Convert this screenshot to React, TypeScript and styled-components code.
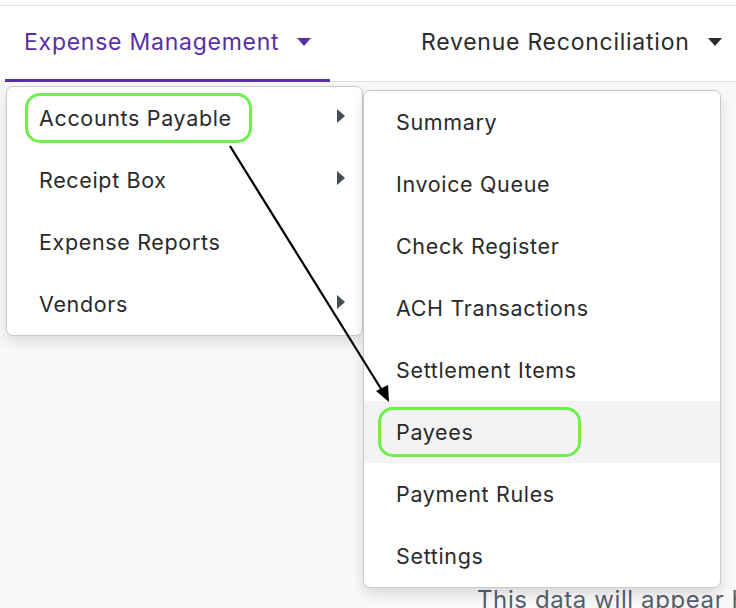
import React from "react";
import styled, { createGlobalStyle } from "styled-components";

const Global = createGlobalStyle`
  html, body { margin: 0; padding: 0; }
  body {
    background: #f9f9f9;
    font-family: Inter, "Noto Sans", "Liberation Sans", sans-serif;
    -webkit-font-smoothing: antialiased;
  }
`;

const Page = styled.div`
  position: relative;
  width: 736px;
  height: 608px;
  overflow: hidden;
  background: #f9f9f9;
`;

const TopStrip = styled.div`
  height: 5px;
  background: #ffffff;
  border-bottom: 1px solid #e2e2e2;
`;

const NavBar = styled.nav`
  display: flex;
  align-items: stretch;
  height: 75px;
  background: #ffffff;
  border-bottom: 1px solid #e0e0e0;
  padding-left: 5px;
`;

const NavTab = styled.div<{ $active?: boolean; $width: number; $pad: number }>`
  display: flex;
  align-items: center;
  gap: 18px;
  width: ${(p) => p.$width}px;
  box-sizing: border-box;
  padding-left: ${(p) => p.$pad}px;
  padding-bottom: 2px;
  font-size: 23px;
  letter-spacing: 0.75px;
  color: ${(p) => (p.$active ? "#5a2ea6" : "#2b2b2b")};
  border-bottom: 3px solid ${(p) => (p.$active ? "#5a2ea6" : "transparent")};
  margin-bottom: -1px;
  white-space: nowrap;
`;

const CaretDown = styled.span`
  width: 0;
  height: 0;
  border-left: 7px solid transparent;
  border-right: 7px solid transparent;
  border-top: 8px solid currentColor;
  margin-top: 1px;
`;

const Content = styled.div`
  display: flex;
  justify-content: flex-start;
  padding: 503px 0 0 477px;
  font-size: 24px;
  letter-spacing: 0.6px;
  color: #56606b;
  white-space: nowrap;
`;

const Menu = styled.div<{ $top: number; $left: number; $width: number }>`
  position: absolute;
  top: ${(p) => p.$top}px;
  left: ${(p) => p.$left}px;
  width: ${(p) => p.$width}px;
  box-sizing: border-box;
  background: #ffffff;
  border: 1px solid #c9c9c9;
  border-radius: 7px;
  box-shadow: 0 6px 14px rgba(0, 0, 0, 0.13);
  overflow: hidden;
`;

const Item = styled.div<{ $pad: number; $hover?: boolean }>`
  display: flex;
  align-items: center;
  justify-content: space-between;
  height: 62px;
  padding-left: ${(p) => p.$pad}px;
  padding-right: 17px;
  font-size: 21.5px;
  letter-spacing: 0.65px;
  color: #2a2a2a;
  background: ${(p) => (p.$hover ? "#f3f3f3" : "transparent")};
  white-space: nowrap;
`;

const Label = styled.span<{ $ring?: boolean; $left?: number; $right?: number }>`
  display: inline-flex;
  align-items: center;
  ${(p) =>
    p.$ring
      ? `
    height: 50px;
    box-sizing: border-box;
    border: 3px solid #6ef04c;
    border-radius: 15px;
    margin-left: -${p.$left}px;
    padding-left: ${p.$left! - 3}px;
    padding-right: ${p.$right! - 3}px;
  `
      : ""}
`;

const CaretRight = styled.span`
  width: 0;
  height: 0;
  border-top: 7px solid transparent;
  border-bottom: 7px solid transparent;
  border-left: 8px solid #464c55;
  margin-bottom: 4px;
`;

const Overlay = styled.svg`
  position: absolute;
  left: 0;
  top: 0;
  pointer-events: none;
`;

const leftItems = [
  { label: "Accounts Payable", sub: true, ring: true },
  { label: "Receipt Box", sub: true },
  { label: "Expense Reports", sub: false },
  { label: "Vendors", sub: true },
];

const rightItems = [
  "Summary",
  "Invoice Queue",
  "Check Register",
  "ACH Transactions",
  "Settlement Items",
  "Payees",
  "Payment Rules",
  "Settings",
];

export default function App() {
  return (
    <Page>
      <Global />
      <TopStrip />
      <NavBar>
        <NavTab $active $width={325} $pad={19}>
          Expense Management
          <CaretDown />
        </NavTab>
        <NavTab $width={406} $pad={91}>
          Revenue Reconciliation
          <CaretDown />
        </NavTab>
      </NavBar>
      <Content>This data will appear here</Content>

      <Menu $top={86} $left={6} $width={357}>
        {leftItems.map((it) => (
          <Item key={it.label} $pad={32}>
            <Label $ring={it.ring} $left={14} $right={20}>
              {it.label}
            </Label>
            {it.sub ? <CaretRight /> : null}
          </Item>
        ))}
      </Menu>

      <Menu $top={90} $left={363} $width={358}>
        {rightItems.map((label) => (
          <Item key={label} $pad={32} $hover={label === "Payees"}>
            <Label $ring={label === "Payees"} $left={18} $right={108}>
              {label}
            </Label>
          </Item>
        ))}
      </Menu>

      <Overlay width="736" height="608" viewBox="0 0 736 608">
        <line x1="230" y1="146" x2="383" y2="392" stroke="#000" strokeWidth="2.2" />
        <polygon points="389,402 376,391 388,385" fill="#000" />
      </Overlay>
    </Page>
  );
}
